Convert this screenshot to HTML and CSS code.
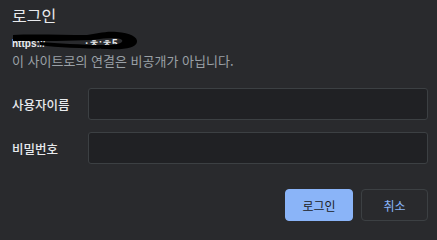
FILE: index.html
```html
<!DOCTYPE html>
<html lang="ko">
<head>
<meta charset="utf-8">
<link rel="stylesheet" href="styles.css">
</head>
<body>
<div class="dialog">
  <h1 class="title">로그인</h1>
  <div class="origin">
    <span class="url">https://</span><span class="url url-tail">·ㅊ;ㅊ5</span>
    <svg class="redact" width="130" height="22" viewBox="0 0 130 22">
      <path d="M1 4 C20 3 50 4 75 4 C85 3 92 0 105 1 C118 2 126 6 125 11 C124 17 112 19 95 18 C70 17 45 17 28 14 L28 11 C45 12 70 14 90 14 C105 14 112 12 110 9 C106 6 95 7 80 9 C60 10 30 10 1 10 Z" fill="#000"/>
    </svg>
  </div>
  <p class="warning">이 사이트로의 연결은 비공개가 아닙니다.</p>
  <div class="fields">
    <label class="label" for="u">사용자이름</label>
    <input class="input" id="u" type="text">
    <label class="label" for="p">비밀번호</label>
    <input class="input" id="p" type="password">
  </div>
  <div class="actions">
    <button class="btn primary">로그인</button>
    <button class="btn secondary">취소</button>
  </div>
</div>
</body>
</html>
```
FILE: styles.css
```css
html, body {
  margin: 0;
  padding: 0;
  background: #292a2d;
}
body {
  font-family: "Noto Sans CJK KR", "Noto Sans", sans-serif;
  color: #e8eaed;
}
.dialog {
  width: 437px;
  height: 233px;
  box-sizing: border-box;
  padding: 5px 9px 0 12px;
}
.title {
  margin: 0;
  font-size: 16px;
  font-weight: 400;
  line-height: 20px;
  color: #e8eaed;
}
.origin {
  position: relative;
  margin-top: 12px;
  height: 14px;
  font-size: 10px;
  line-height: 14px;
  font-family: "Liberation Sans", sans-serif;
  font-weight: 700;
  color: #e8eaed;
}
.url-tail {
  margin-left: 40px;
}
.redact {
  position: absolute;
  left: 0;
  top: -6px;
}
.warning {
  margin: 1px 0 0;
  font-size: 13px;
  line-height: 17px;
  color: #9aa0a6;
}
.fields {
  display: grid;
  grid-template-columns: 76px 1fr;
  row-gap: 12px;
  align-items: center;
  margin-top: 19px;
}
.label {
  font-size: 12.5px;
  font-weight: 500;
  color: #e8eaed;
}
.input {
  height: 32px;
  box-sizing: border-box;
  margin: 0;
  background: #202124;
  border: 1px solid #3c4043;
  border-radius: 3px;
  outline: none;
}
.actions {
  display: flex;
  justify-content: flex-end;
  gap: 8px;
  margin-top: 25px;
}
.btn {
  height: 32px;
  box-sizing: border-box;
  border-radius: 4px;
  font-family: "Noto Sans CJK KR", sans-serif;
  font-size: 12px;
  padding: 0;
}
.primary {
  width: 68px;
  background: #8ab4f8;
  border: 1px solid #8ab4f8;
  color: #202124;
}
.secondary {
  width: 67px;
  background: #292a2d;
  border: 1px solid #3c4043;
  color: #8ab4f8;
}
```
